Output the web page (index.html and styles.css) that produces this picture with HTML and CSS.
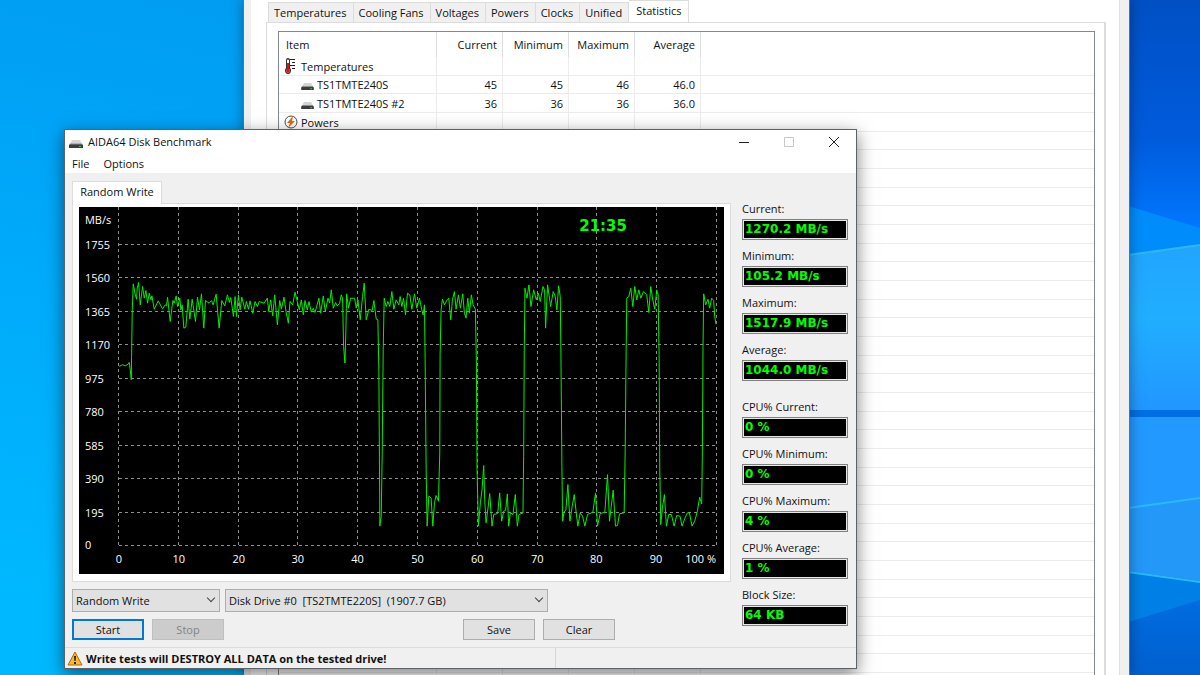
FILE: index.html
```html
<!DOCTYPE html>
<html lang="en">
<head>
  <meta charset="UTF-8">
  <title>AIDA64 Disk Benchmark</title>
  <link rel="stylesheet" href="styles.css">
</head>
<body>

<svg class="symbols" aria-hidden="true">
  <symbol id="drive" viewBox="0 0 14 10">
    <path d="M3 1h8l2 4H1z" fill="#d4d4d4"/>
    <path d="M1 5h12l1 1v3H0V6z" fill="#3a3d3d"/>
    <path d="M1 5h12" stroke="#8b8e8e"/>
    <path d="M10 7h2v1h-2z" fill="#2fd03a"/>
  </symbol>
</svg>

<div class="desktop">
  <svg class="wallpaper" viewBox="0 0 72 675" preserveAspectRatio="none" aria-hidden="true">
    <defs>
      <linearGradient id="sky" x1="0" y1="0" x2="0" y2="1">
        <stop offset="0" stop-color="#0050c4"/>
        <stop offset=".6" stop-color="#005bdc"/>
        <stop offset="1" stop-color="#0078ff"/>
      </linearGradient>
      <linearGradient id="pane" x1="0" y1="0" x2="0" y2="1">
        <stop offset="0" stop-color="#22a4ff"/>
        <stop offset=".45" stop-color="#20aeff"/>
        <stop offset="1" stop-color="#2296ff"/>
      </linearGradient>
      <linearGradient id="floor" x1="0" y1="0" x2="0" y2="1">
        <stop offset="0" stop-color="#006ce0"/>
        <stop offset="1" stop-color="#0060cf"/>
      </linearGradient>
    </defs>
    <rect width="72" height="230" fill="url(#sky)"/>
    <path d="M0 206L72 228V246L0 255z" fill="#008dfb"/>
    <path d="M0 255L72 245V410H0z" fill="url(#pane)"/>
    <path d="M0 410h72v7H0z" fill="#006fe4"/>
    <path d="M0 417h72v82L0 508z" fill="#2299ff"/>
    <path d="M0 508L72 498V582L0 571z" fill="#2398f8"/>
    <path d="M0 571L72 581V602L0 622z" fill="#0080e6"/>
    <path d="M0 622L72 600V675H0z" fill="url(#floor)"/>
    <path d="M0 255L72 245M0 508L72 498M0 572L72 582" stroke="#2cb8fb" stroke-width="2"/>
  </svg>

  <div class="monitor">
    <div class="monitor-page">
      <nav class="tabs">
        <button>Temperatures</button>
        <button>Cooling Fans</button>
        <button>Voltages</button>
        <button>Powers</button>
        <button>Clocks</button>
        <button>Unified</button>
        <button class="selected">Statistics</button>
      </nav>
      <div class="tab-panel">
        <div class="list">
          <table>
            <thead>
              <tr>
                <th class="item">Item</th>
                <th>Current</th>
                <th>Minimum</th>
                <th>Maximum</th>
                <th>Average</th>
                <th class="rest"></th>
              </tr>
            </thead>
            <tbody id="rows">
              <tr>
                <td class="item"><span class="group">
                  <svg width="14" height="16" viewBox="0 0 14 16">
                    <path d="M2 2q0-2 2-2t2 2v8q1 1 1 2 0 4-3 4t-3-4q0-1 1-2z" fill="#333"/>
                    <path d="M3 2q1-1 2 0v9q1 1 1 2-1 2-2 2t-2-2q0-1 1-2z" fill="#fff"/>
                    <path d="M4 5h1v6q1 1 1 2-1 2-2 2t-2-2q0-1 1-2V5z" fill="#e01010"/>
                    <path d="M6 1.500h5M8 4.500h3M6 7.500h5M8 10.500h3" stroke="#222"/>
                  </svg>Temperatures</span></td>
                <td></td><td></td><td></td><td></td><td></td>
              </tr>
              <tr>
                <td class="item"><span class="sensor"><svg width="13" height="9"><use href="#drive"/></svg>TS1TMTE240S</span></td>
                <td>45</td><td>45</td><td>46</td><td>46.0</td><td></td>
              </tr>
              <tr>
                <td class="item"><span class="sensor"><svg width="13" height="9"><use href="#drive"/></svg>TS1TMTE240S #2</span></td>
                <td>36</td><td>36</td><td>36</td><td>36.0</td><td></td>
              </tr>
              <tr>
                <td class="item"><span class="group">
                  <svg width="14" height="14" viewBox="0 0 14 14">
                    <circle cx="7" cy="7" r="6" fill="#fff" stroke="#4c4c4c"/>
                    <path d="M9 1L3 8h3l-2 5 7-7H8z" fill="#e0681a"/>
                  </svg>Powers</span></td>
                <td></td><td></td><td></td><td></td><td></td>
              </tr>
            </tbody>
          </table>
        </div>
      </div>
    </div>
  </div>

  <div class="dialog">
    <div class="titlebar">
      <svg width="14" height="10"><use href="#drive"/></svg>
      <span class="title">AIDA64 Disk Benchmark</span>
      <button aria-label="Minimize"><svg width="12" height="12"><path d="M1 6.500h10" stroke="#222"/></svg></button>
      <button aria-label="Maximize" disabled><svg width="12" height="12"><path d="M1.500 1.500h9v9h-9z" fill="none" stroke="#c8c8c8"/></svg></button>
      <button aria-label="Close"><svg width="12" height="12"><path d="M1 1l10 10M11 1L1 11" stroke="#222"/></svg></button>
    </div>
    <div class="menu">
      <button>File</button>
      <button>Options</button>
    </div>

    <div class="content">
      <div class="main">
        <button class="bench-tab">Random Write</button>
        <div class="bench-panel">
          <svg class="chart" viewBox="0 0 646 368">
            <g id="grid" class="grid"></g>
            <g id="labels" class="labels">
              <text x="6" y="17">MB/s</text>
            </g>
            <text class="elapsed" x="501" y="24">21:35</text>
            <!-- the trace is kept in thirds of a chart unit -->
            <svg width="646" height="368" viewBox="0 -189 1938 1104" class="trace">
              <polyline transform="translate(-24)" points="145,290 155,285 163,288 172,283 175,278 178,300 181,330 182,260 184,120 187,42 193,75 197,88 199,55 203,38 208,105 215,50 220,85 225,62 230,100 235,70 240,90 243,78 250,118 262,93 275,117 283,105 287,108 290,82 298,155 306,92 310,100 316,78 320,110 327,85 330,120 334,105 339,175 345,172 352,88 357,148 364,88 368,115 374,155 380,82 386,120 392,72 399,175 404,92 415,100 422,92 427,105 436,73 445,175 453,92 462,108 470,75 476,98 480,83 488,140 493,80 497,140 503,75 508,120 513,82 519,105 522,118 527,95 533,118 538,93 546,130 553,95 560,110 565,95 580,100 590,85 594,125 600,90 606,138 612,75 620,165 627,92 632,118 640,82 646,125 653,160 658,95"/>
              <polyline transform="translate(606)" points="28,95 36,105 43,67 50,95 56,120 62,90 68,135 73,92 80,120 85,95 92,127 98,115 103,128 115,85 120,130 128,78 134,125 142,85 147,100 152,60 158,115 165,98 170,108 177,100 182,75 186,85 189,230 193,280 196,180 198,72 204,115 210,85 222,85 227,115 232,90 239,150 246,80 251,40 257,150 265,118 275,122 280,92 287,148 292,150 295,305 298,770 302,740 305,555 308,240 311,85 317,110 322,95 328,110 334,65 340,118 347,90 355,105 359,80 364,110 369,85 375,135 381,70 388,75 394,118 402,72 409,115 417,85 424,120 428,135 432,105 434,270 437,600 440,770 445,680 452,685 457,770 462,700 467,678 474,695 478,550 479,255 482,120 486,88 492,105 500,90 505,85 511,150 516,90 522,65 527,118 534,75 540,115 547,72 552,130 557,145 562,85 567,130 573,75 578,105 585,118 588,280 590,600 594,770 600,700 605,660 610,588"/>
              <polyline transform="translate(1146)" points="70,588 73,690 77,760 83,715 88,672 95,770 100,735 112,732 118,670 124,755 130,725 136,722 141,673 145,770 150,730 158,735 165,675 171,770 176,735 188,730 190,560 192,225 194,55 200,85 206,45 212,110 220,60 228,90 234,70 240,95 248,50 253,60 256,175 262,45 271,110 279,65 285,80 290,120 295,48 300,80 302,250 305,590 307,755 311,730 317,720 323,645 329,755 336,710 342,675 348,730 353,770 360,730 367,740 374,770 382,735 398,728 406,670 412,770 420,732 434,728 442,615 448,755 459,662 466,770 472,768 478,733 492,730 495,550 498,240 500,85 506,80 512,55 518,110 524,50 530,90 536,60 542,85 550,65 560,75 566,128 572,50 578,90 584,118 590,60 594,75 597,255 599,595 602,765 607,715 613,675 619,770 626,735 634,735 642,770 650,738 660,740 666,770 675,745 682,730 688,730 696,770 704,755 712,725 719,683 725,703 727,545 729,230 731,72 737,105 744,88 749,115 755,85 761,92 764,140 768,163"/>
            </svg>
          </svg>
        </div>

        <div class="selects">
          <div class="select test"><select aria-label="Test"><option>Random Write</option></select></div>
          <div class="select disk"><select aria-label="Drive"><option>Disk Drive #0&nbsp; [TS2TMTE220S]&nbsp; (1907.7 GB)</option></select></div>
        </div>
        <div class="buttons">
          <button class="default">Start</button>
          <button disabled>Stop</button>
          <button class="save">Save</button>
          <button>Clear</button>
        </div>
      </div>

      <div class="stats">
        <label for="cur">Current:</label><output id="cur">1270.2 MB/s</output>
        <label for="min">Minimum:</label><output id="min">105.2 MB/s</output>
        <label for="max">Maximum:</label><output id="max">1517.9 MB/s</output>
        <label for="avg">Average:</label><output id="avg" class="last">1044.0 MB/s</output>
        <label for="cpuCur">CPU% Current:</label><output id="cpuCur">0 %</output>
        <label for="cpuMin">CPU% Minimum:</label><output id="cpuMin">0 %</output>
        <label for="cpuMax">CPU% Maximum:</label><output id="cpuMax">4 %</output>
        <label for="cpuAvg">CPU% Average:</label><output id="cpuAvg">1 %</output>
        <label for="block">Block Size:</label><output id="block">64 KB</output>
      </div>
    </div>

    <div class="statusbar">
      <div class="warning">
        <svg width="16" height="15" viewBox="0 0 16 15">
          <path d="M8 1L15 14H1z" fill="#fdb92c" stroke="#a8681a" stroke-linejoin="round"/>
          <path d="M7 5h2l-.4 5H7.400zM7 11h2v2H7z" fill="#222"/>
        </svg>
        Write tests will DESTROY ALL DATA on the tested drive!
      </div>
      <div class="progress"></div>
    </div>
  </div>
</div>

<script>
  const svgNS = "http://www.w3.org/2000/svg";
  const left = 40, right = 638, bottom = 339;
  const grid = document.getElementById("grid");
  const labels = document.getElementById("labels");

  function addLine(x1, y1, x2, y2) {
    const line = document.createElementNS(svgNS, "path");
    line.setAttribute("d", `M${x1} ${y1}L${x2} ${y2}`);
    grid.appendChild(line);
  }

  function addLabel(x, y, text, anchor) {
    const label = document.createElementNS(svgNS, "text");
    label.setAttribute("x", x);
    label.setAttribute("y", y);
    label.setAttribute("text-anchor", anchor);
    label.textContent = text;
    labels.appendChild(label);
  }

  for (let i = 0; i <= 10; i++) {
    const x = Math.round(left + (right - left) * i / 10);
    addLine(x, 0, x, bottom);
    if (i < 10) {
      addLabel(x, 357, i * 10, "middle");
    }
  }
  addLabel(right, 357, "100 %", "end");

  for (let i = 0; i < 10; i++) {
    const y = Math.round(bottom - i * 301 / 9);
    addLine(left, y, right, y);
    addLabel(6, y + 4, i * 195, "start");
  }

  // empty rows down to the end of the list
  const rows = document.getElementById("rows");
  for (let i = 0; i < 40; i++) {
    const row = rows.insertRow();
    for (let c = 0; c < 6; c++) {
      row.insertCell();
    }
  }
</script>

</body>
</html>
```
FILE: styles.css
```css
body {
  margin: 0;
  font-family: "Open Sans", "Segoe UI", sans-serif;
  font-size: 11px;
  color: #111;
}

button, select {
  font: inherit;
  color: inherit;
}

.symbols {
  position: absolute;
  width: 0;
  height: 0;
}

.desktop {
  position: relative;
  height: 100vh;
  overflow: hidden;
  background: linear-gradient(12deg, #00b8ff 10%, #00a8fa 50%, #009cf2 80%);
}

.wallpaper {
  position: absolute;
  top: 0;
  right: 0;
  width: 72px;
  height: 100%;
}

/* sensor window behind */

.monitor {
  position: absolute;
  top: 0;
  bottom: 0;
  left: 243px;
  right: 70px;
  box-sizing: border-box;
  display: flex;
  padding: 0 9px 0 7px;
  background: #f0f0f0;
  border: solid #4a7896;
  border-width: 0 1px;
  box-shadow: 0 0 12px rgba(0, 0, 0, 0.35);
}

.monitor-page {
  flex: 1;
  display: flex;
  flex-direction: column;
  padding: 0 13px 0 15px;
  background: #fff;
  border-right: 1px solid #e0e0e0;
}

.tabs {
  display: flex;
  align-items: flex-end;
  height: 22px;
  padding-left: 2px;
}

.tabs button {
  height: 20px;
  padding: 0 6px 0 5px;
  background: #f0f0f0;
  border: 1px solid #dcdcdc;
  border-width: 1px 1px 0 0;
}

.tabs button:first-child {
  border-left-width: 1px;
}

.tabs .selected {
  height: 23px;
  margin-bottom: -1px;
  padding: 0 7px 3px;
  background: #fff;
}

.tab-panel {
  flex: 1;
  display: flex;
  min-height: 0;
  padding: 8px 9px 0 11px;
  border: solid #dcdcdc;
  border-width: 1px 2px 0 1px;
}

.list {
  flex: 1;
  overflow: hidden;
  border: solid #828790;
  border-width: 1px 1px 0;
}

.list table {
  width: 100%;
  table-layout: fixed;
  border-collapse: separate;
  border-spacing: 0;
}

.list th, .list td {
  box-sizing: border-box;
  padding: 0 5px 0 0;
  text-align: right;
  font-weight: normal;
  border-right: 1px solid #ececec;
}

.list th {
  width: 66px;
  height: 25px;
  border-color: #dedede;
}

.list td {
  height: 19px;
  border-bottom: 1px solid #ececec;
}

.list tr:nth-child(3n + 2) td {
  height: 18px;
}

.list th:last-child, .list td:last-child {
  width: auto;
  border-right: 0;
}

.list .item {
  width: 158px;
  padding-left: 7px;
  text-align: left;
}

.group, .sensor {
  display: flex;
  align-items: center;
  height: 17px;
}

.group {
  gap: 3px;
  margin-left: -2px;
}

.sensor {
  gap: 3px;
  padding-left: 15px;
}

.sensor svg {
  margin-top: 4px;
}

/* benchmark window */

.dialog {
  position: absolute;
  top: 129px;
  left: 64px;
  box-sizing: border-box;
  width: 793px;
  background: #f0f0f0;
  border: 1px solid #5c6266;
  box-shadow: 0 5px 16px rgba(0, 0, 0, 0.5);
}

.titlebar {
  display: flex;
  align-items: center;
  height: 23px;
  padding-left: 4px;
  background: #fff;
}

.titlebar > svg {
  margin-top: 5px;
}

.title {
  flex: 1;
  margin-left: 5px;
}

.titlebar button {
  display: flex;
  align-items: center;
  justify-content: center;
  width: 45px;
  height: 23px;
  padding: 0;
  background: none;
  border: 0;
}

.menu {
  display: flex;
  gap: 14px;
  height: 20px;
  padding-left: 7px;
  background: #fff;
}

.menu button {
  padding: 0;
  background: none;
  border: 0;
}

.content {
  display: flex;
  gap: 11px;
  padding: 8px 8px 7px 7px;
}

.main {
  flex: 1;
}

.bench-tab {
  display: block;
  position: relative;
  width: 90px;
  height: 23px;
  margin-bottom: -1px;
  padding: 0 0 4px;
  background: #fff;
  border: 1px solid #dcdcdc;
  border-bottom: 0;
}

.bench-panel {
  padding: 3px 6px 7px;
  background: #fff;
  border: 1px solid #dcdcdc;
}

.chart {
  display: block;
  width: 100%;
  background: #000;
}

.grid {
  fill: none;
  stroke: #8c8c8c;
  stroke-dasharray: 3 3;
  shape-rendering: crispEdges;
}

.labels {
  fill: #fff;
}

.elapsed {
  fill: #00ff00;
  font: bold 15px "DejaVu Sans", Verdana, sans-serif;
}

.trace {
  fill: none;
  stroke: #00f000;
  stroke-width: 3;
}

.selects {
  display: flex;
  gap: 5px;
  margin-top: 7px;
}

.select {
  position: relative;
}

.select::after {
  content: "";
  position: absolute;
  top: 6px;
  right: 6px;
  width: 5px;
  height: 5px;
  border: solid #444;
  border-width: 0 1px 1px 0;
  transform: rotate(45deg);
  pointer-events: none;
}

.select select {
  display: block;
  width: 100%;
  height: 23px;
  padding: 0 3px;
  appearance: none;
  background: #e1e1e1;
  border: 1px solid #adadad;
  border-radius: 0;
}

.test {
  width: 148px;
}

.disk {
  width: 323px;
}

.buttons {
  display: flex;
  gap: 8px;
  margin-top: 7px;
}

.buttons button {
  width: 72px;
  height: 21px;
  padding: 0;
  background: #e1e1e1;
  border: 1px solid #adadad;
}

.buttons .default {
  border: 2px solid #0078d7;
}

.buttons button:disabled {
  color: #838383;
  background: #ccc;
  border-color: #bfbfbf;
}

.buttons .save {
  margin-left: 231px;
}

.stats {
  display: flex;
  flex-direction: column;
  width: 106px;
  padding-top: 18px;
}

.stats label {
  height: 20px;
  line-height: 20px;
}

.stats output {
  box-sizing: border-box;
  height: 21px;
  margin-bottom: 6px;
  padding-left: 2px;
  background: #000;
  border: 1px solid #808080;
  box-shadow: inset 0 0 0 1px #e8e8e8;
  color: #00ff00;
  font: bold 12px/19px "DejaVu Sans", Verdana, sans-serif;
}

.stats .last {
  margin-bottom: 16px;
}

.statusbar {
  display: flex;
  height: 20px;
  border-top: 1px solid #dcdcdc;
}

.warning {
  display: flex;
  align-items: center;
  gap: 3px;
  width: 488px;
  padding-left: 2px;
  font-weight: bold;
  border-right: 1px solid #d7d7d7;
}

.progress {
  flex: 1;
}
```
